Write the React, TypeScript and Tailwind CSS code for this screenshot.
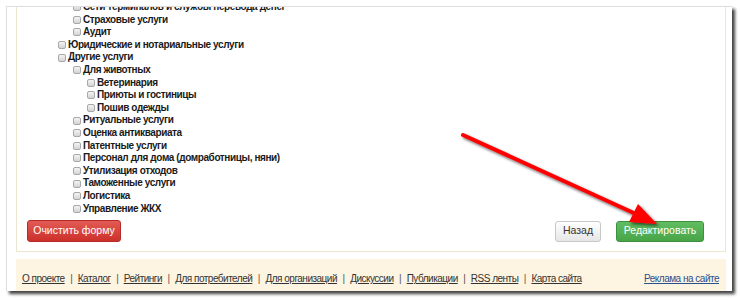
import React from "react";

type Item = { label: string; level: 1 | 2 | 3 };

const items: Item[] = [
  { label: "Сети терминалов и службы перевода денег", level: 2 },
  { label: "Страховые услуги", level: 2 },
  { label: "Аудит", level: 2 },
  { label: "Юридические и нотариальные услуги", level: 1 },
  { label: "Другие услуги", level: 1 },
  { label: "Для животных", level: 2 },
  { label: "Ветеринария", level: 3 },
  { label: "Приюты и гостиницы", level: 3 },
  { label: "Пошив одежды", level: 3 },
  { label: "Ритуальные услуги", level: 2 },
  { label: "Оценка антиквариата", level: 2 },
  { label: "Патентные услуги", level: 2 },
  { label: "Персонал для дома (домработницы, няни)", level: 2 },
  { label: "Утилизация отходов", level: 2 },
  { label: "Таможенные услуги", level: 2 },
  { label: "Логистика", level: 2 },
  { label: "Управление ЖКХ", level: 2 },
];

const indent: Record<number, string> = {
  1: "pl-[41px]",
  2: "pl-[56px]",
  3: "pl-[70px]",
};

const links = [
  "О проекте",
  "Каталог",
  "Рейтинги",
  "Для потребителей",
  "Для организаций",
  "Дискуссии",
  "Публикации",
  "RSS ленты",
  "Карта сайта",
];

function Box() {
  return (
    <span className="inline-block w-[8px] h-[8px] mr-[2px] rounded-[2px] border border-[#a8a8a8] bg-gradient-to-b from-[#f4f4f4] to-[#d4d4d4] shrink-0" />
  );
}

function Arrow() {
  return (
    <svg className="absolute inset-0 pointer-events-none" width="740" height="300" viewBox="0 0 740 300">
      <defs>
        <filter id="sh" x="-10%" y="-10%" width="130%" height="130%">
          <feDropShadow dx="2" dy="2" stdDeviation="1.4" floodColor="#000" floodOpacity="0.6" />
        </filter>
      </defs>
      <g filter="url(#sh)">
        <line x1="463" y1="135" x2="636" y2="214" stroke="#ff0000" strokeWidth="4" strokeLinecap="round" />
        <polygon points="657,224 629,222 638,204" fill="#ff0000" />
      </g>
    </svg>
  );
}

export default function App() {
  return (
    <div
      className="relative w-[740px] h-[300px] bg-white overflow-hidden pt-[6px] pl-[6px]"
      style={{ fontFamily: "'Liberation Sans', Arial, sans-serif" }}
    >
      <div className="w-[726px] h-[285px] bg-white border-t border-l border-[#dedede] shadow-[3px_3px_3px_rgba(0,0,0,0.75)] overflow-hidden flex flex-col pl-[9px] pr-[6px]">
        {/* form panel */}
        <div className="h-[245px] border-l border-r border-b border-[#ece6cf] flex flex-col">
          <ul className="-mt-[6px] text-[10px] font-bold text-[#1a1a1a] leading-[12.6px] tracking-[-0.4px]">
            {items.map((it) => (
              <li key={it.label} className={`flex items-center h-[12.6px] whitespace-nowrap ${indent[it.level]}`}>
                <Box />
                {it.label}
              </li>
            ))}
          </ul>
          <div className="mt-[5px] flex items-center pl-[10px] pr-[21px] text-[10.5px] whitespace-nowrap">
            <button className="h-[22px] w-[94px] rounded-[3px] border border-[#b52b27] bg-gradient-to-b from-[#e25a54] to-[#cc2f2a] text-white">
              Очистить форму
            </button>
            <div className="flex-1" />
            <button className="h-[21px] w-[46px] rounded-[3px] border border-[#c8c8c8] bg-gradient-to-b from-[#ffffff] to-[#e6e6e6] text-[#333]">
              Назад
            </button>
            <button className="ml-[15px] h-[21px] w-[88px] rounded-[3px] border border-[#3e8f3e] bg-gradient-to-b from-[#62bd62] to-[#47a447] text-white">
              Редактировать
            </button>
          </div>
        </div>
        {/* footer */}
        <div className="mt-[7px] flex-1 bg-[#fdf4e1] flex items-end justify-between pl-[6px] pr-[7px] pb-[5px] text-[10px] tracking-[-0.5px] whitespace-nowrap">
          <div className="flex items-center text-[#333]">
            {links.map((l, i) => (
              <React.Fragment key={l}>
                {i > 0 && <span className="mx-[5.5px] text-[#555]">|</span>}
                <a className="underline">{l}</a>
              </React.Fragment>
            ))}
          </div>
          <a className="underline text-[#2c4f8e]">Реклама на сайте</a>
        </div>
      </div>
      <Arrow />
    </div>
  );
}
